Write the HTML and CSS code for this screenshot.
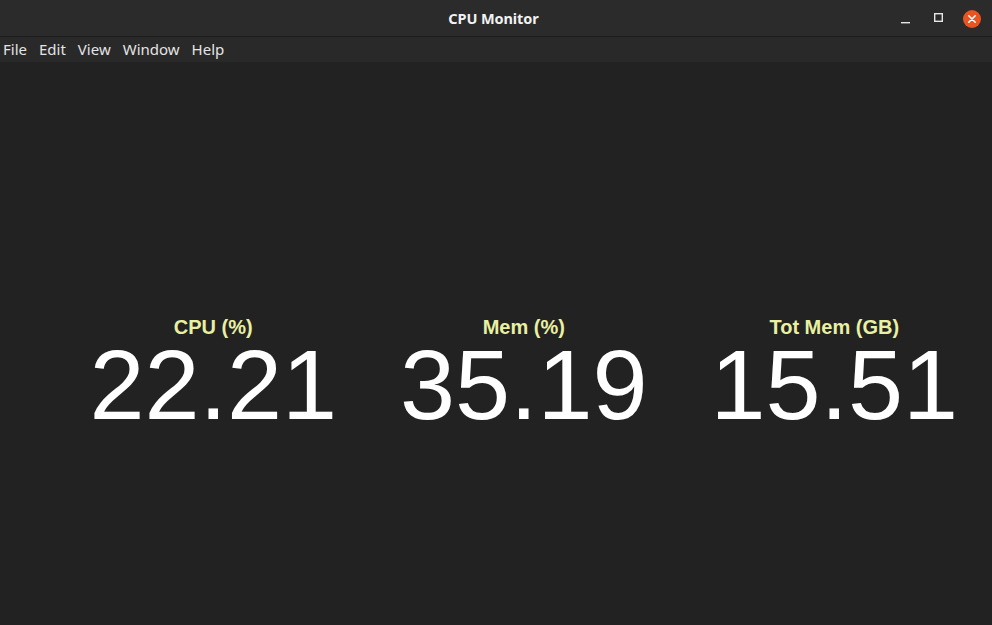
FILE: index.html
```html
<!DOCTYPE html>
<html>
<head>
<meta charset="utf-8">
<link rel="stylesheet" href="styles.css">
</head>
<body>
<div class="window">
  <header class="titlebar">
    <div class="title">CPU Monitor</div>
    <div class="controls">
      <span class="btn min"><svg width="10" height="10" viewBox="0 0 10 10"><rect x="0" y="7" width="9" height="1.4" fill="#e6e6e6"/></svg></span>
      <span class="btn max"><svg width="10" height="10" viewBox="0 0 10 10"><rect x="0.7" y="0.7" width="7.6" height="7.6" fill="none" stroke="#e6e6e6" stroke-width="1.4"/></svg></span>
      <span class="btn close"><svg width="18" height="18" viewBox="0 0 18 18"><circle cx="9" cy="9" r="9" fill="#e95420"/><path d="M5.8 5.8 L12.2 12.2 M12.2 5.8 L5.8 12.2" stroke="#ffffff" stroke-width="1.6" stroke-linecap="round"/></svg></span>
    </div>
  </header>
  <nav class="menubar">
    <span class="menu-item">File</span>
    <span class="menu-item">Edit</span>
    <span class="menu-item">View</span>
    <span class="menu-item">Window</span>
    <span class="menu-item">Help</span>
  </nav>
  <main class="content">
    <div class="stats">
      <div class="stat">
        <div class="label">CPU (%)</div>
        <div class="value">22.21</div>
      </div>
      <div class="stat">
        <div class="label">Mem (%)</div>
        <div class="value">35.19</div>
      </div>
      <div class="stat">
        <div class="label">Tot Mem (GB)</div>
        <div class="value">15.51</div>
      </div>
    </div>
  </main>
</div>
</body>
</html>
```

FILE: styles.css
```css
html, body {
  margin: 0;
  padding: 0;
  background: #222222;
}
.window {
  width: 992px;
  height: 625px;
  display: flex;
  flex-direction: column;
  background: #222222;
  overflow: hidden;
}
.titlebar {
  height: 36px;
  flex: 0 0 36px;
  background: #2b2b2b;
  border-bottom: 1px solid #1c1c1c;
  position: relative;
  display: flex;
  align-items: center;
  justify-content: center;
}
.title {
  font-family: "Noto Sans", "DejaVu Sans", sans-serif;
  font-weight: bold;
  font-size: 14.5px;
  color: #f2f2f2;
  letter-spacing: -0.1px;
  margin-right: 5px;
}
.controls {
  position: absolute;
  right: 11px;
  top: 9px;
  display: flex;
  align-items: center;
}
.btn {
  display: flex;
  align-items: center;
  justify-content: center;
}
.btn.min { width: 30px; height: 18px; margin-right: 3px; }
.btn.max { width: 30px; height: 18px; margin-right: 9px; padding-bottom: 2px; }
.btn.min svg { margin-top: 2px; }
.btn.close { width: 18px; height: 18px; }
.menubar {
  height: 25px;
  flex: 0 0 25px;
  box-sizing: border-box;
  padding-bottom: 2px;
  background: #292929;
  display: flex;
  align-items: center;
  padding-left: 3px;
  gap: 12px;
}
.menu-item {
  font-family: "Noto Sans", "DejaVu Sans", sans-serif;
  font-size: 15px;
  color: #e4e4e4;
}
.content {
  flex: 1;
  display: flex;
  flex-direction: column;
}
.stats {
  margin-top: 254px;
  padding-left: 58px;
  display: grid;
  grid-template-columns: repeat(3, 310.5px);
}
.stat {
  display: flex;
  flex-direction: column;
  align-items: center;
}
.label {
  font-family: "Liberation Sans", Arial, sans-serif;
  font-weight: bold;
  font-size: 20px;
  line-height: 23px;
  color: #e9f0a2;
}
.value {
  font-family: "Liberation Sans", Arial, sans-serif;
  font-size: 99px;
  line-height: 91px;
  color: #ffffff;
}
```
